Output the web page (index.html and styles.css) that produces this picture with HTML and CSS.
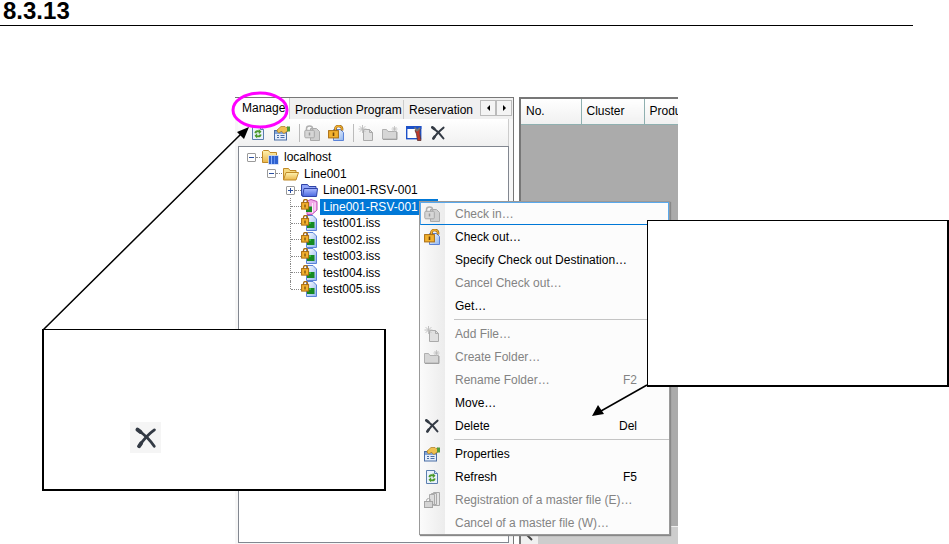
FILE: index.html
```html
<!DOCTYPE html>
<html lang="en">
<head>
<meta charset="utf-8">
<title>8.3.13</title>
<link rel="stylesheet" href="styles.css">
</head>
<body>
<svg class="defs" width="0" height="0" aria-hidden="true">
    <defs>
        <linearGradient id="g-page" x1="0" y1="0" x2="1" y2="1"><stop offset="0" stop-color="#fff"/><stop offset="1" stop-color="#8fb4ee"/></linearGradient>
        <linearGradient id="g-gold" x1="0" y1="0" x2="0" y2="1"><stop offset="0" stop-color="#fff3b0"/><stop offset="1" stop-color="#e9b64c"/></linearGradient>
        <linearGradient id="g-blue" x1="0" y1="0" x2="0" y2="1"><stop offset="0" stop-color="#a9b9ff"/><stop offset="1" stop-color="#4a68e0"/></linearGradient>
    </defs>
    <symbol id="i-refresh" viewBox="0 0 16 16">
        <path d="M2.500 1.500h8l3 3v10h-11z" fill="#eaf2fd" stroke="#5b7fae"/>
        <path d="M10.500 1.500v3h3" fill="#cfdff5" stroke="#5b7fae"/>
        <path d="M4.500 8c0-2 2-3.500 4.300-2.500V4l2.700 2.700L8.800 9.200V7.500C7.500 7 6.500 7.500 6.300 8.500z" fill="#4c9a2a"/>
        <path d="M11.500 9.500c0 2.300-2 3.500-4.300 2.500v1.500l-2.700-2.700 2.700-2.500v1.900c1.300.5 2.300 0 2.500-1z" fill="#4c9a2a"/>
    </symbol>
    <symbol id="i-props" viewBox="0 0 16 16">
        <rect x=".5" y="5.500" width="12" height="9.500" fill="#e4eefc" stroke="#4a6ea5"/>
        <path d="M1 6h11v3H1z" fill="#7fa3d8"/>
        <path d="M3 10.500h2m1.500 0h4M3 12.500h2m1.500 0h4" stroke="#4a6ea5"/>
        <path d="M3 5l4-3.500h4l1 1 2-.5v4l-2 1-2 1.500-1.500-1L8 6.500 7 6.500 5 8 3.500 7z" fill="#efc050" stroke="#a87a20" stroke-width=".7"/>
        <path d="M13 1.500h3V6.500h-3z" fill="#4f9a3a"/>
    </symbol>
    <symbol id="i-checkin" viewBox="0 0 16 16">
        <path d="M6.500 3.500h6l3 3v9h-9z" fill="#cfcfcf" stroke="#aaa"/>
        <path d="M2.500 5.500V3.500a3 2.500 0 0 1 6 0v2" fill="none" stroke="#b0b0b0" stroke-width="1.500"/>
        <rect x=".8" y="5.300" width="9.500" height="7.500" rx="1" fill="#d6d6d6" stroke="#a8a8a8"/>
        <path d="M5.500 7.500v3" stroke="#999" stroke-width="1.500"/>
    </symbol>
    <symbol id="i-checkout" viewBox="0 0 16 16">
        <path d="M5.500 4.500h7l3 3v8h-10z" fill="url(#g-page)" stroke="#5a82d8"/>
        <path d="M7.500 6V3.500a3.200 2.400 0 0 1 6.500 0V5.500" fill="none" stroke="#8a5a10" stroke-width="2.600"/>
        <path d="M7.500 6V3.500a3.200 2.400 0 0 1 6.500 0V5" fill="none" stroke="#f0ad2e" stroke-width="1.400"/>
        <rect x=".6" y="5.600" width="9.800" height="7.300" fill="#f3b22f" stroke="#a86c10"/>
        <path d="M5.500 7.500v3.500" stroke="#70450a" stroke-width="1.600"/>
    </symbol>
    <symbol id="i-addfile" viewBox="0 0 16 16">
        <path d="M5.500 4.500h6l3 3v8h-9z" fill="#e0e0e0" stroke="#aaa"/>
        <path d="M11.500 4.500v3h3" fill="none" stroke="#aaa"/>
        <path d="M4.500 0v8M.5 4h8M1.700 1.200l5.600 5.600M7.300 1.200L1.700 6.800" stroke="#bbb" stroke-width=".9"/>
    </symbol>
    <symbol id="i-newfolder" viewBox="0 0 16 16">
        <path d="M.5 14v-9.500h4l1.500 2h8.500V14z" fill="#d6d6d6" stroke="#b0b0b0"/>
        <path d="M1 14.500h14V7" fill="none" stroke="#a0a0a0"/>
        <path d="M12.500 1v6M9.500 4h6M10.500 2l4 4M14.500 2l-4 4" stroke="#bbb" stroke-width=".8"/>
    </symbol>
    <symbol id="i-master" viewBox="0 0 16 16">
        <rect x=".7" y="1.700" width="14" height="12" fill="#fff" stroke="#1c50c8" stroke-width="1.400"/>
        <path d="M0 1h15.400v3H0z" fill="#1c50c8"/>
        <path d="M9 5.500l5-1.500-.5 4 1.500 7.500h-3.500L10.500 9z" fill="#c0392b" stroke="#5c3030" stroke-width=".8"/>
        <path d="M8.500 2.500l2.500 3 3-2.500" fill="none" stroke="#777" stroke-width="1.700"/>
    </symbol>
    <symbol id="i-delete" viewBox="0 0 16 16">
        <path d="M2.300 2.400C6 5 10.500 9 13.500 13.500" fill="none" stroke="#333a44" stroke-width="1.900" stroke-linecap="round"/>
        <path d="M13.600 2.600C9.500 5.500 6 9.500 3.300 13.600" fill="none" stroke="#333a44" stroke-width="1.900" stroke-linecap="round"/>
        <path d="M2.300 2.400l2 1.500M3.400 13.500l1.300-1.900" stroke="#333a44" stroke-width="2.600" stroke-linecap="round"/>
    </symbol>
    <symbol id="i-register" viewBox="0 0 16 16">
        <path d="M9.500.5h6v13h-6z" fill="#e4e4e4" stroke="#aaa"/>
        <path d="M7.500 1.500h5v11h-5z" fill="#e4e4e4" stroke="#aaa"/>
        <path d="M5.500 2.500h5v10h-5z" fill="#dcdcdc" stroke="#aaa"/>
        <path d="M2.500 10V8.500a2 2 0 0 1 4 0V10" fill="none" stroke="#aaa"/>
        <rect x=".5" y="9.500" width="8" height="6" fill="#d4d4d4" stroke="#a4a4a4"/>
    </symbol>
    <symbol id="i-host" viewBox="0 0 17 16">
        <path d="M.5 13.500v-11l1-1h5l1.500 2h6.500v10z" fill="url(#g-gold)" stroke="#c08a28"/>
        <path d="M6.500 6.500h10v9h-10z" fill="#2f62cf" stroke="#fff" stroke-width=".6"/>
        <path d="M9.500 7v8" stroke="#8db4ff"/>
        <path d="M12.500 7v8" stroke="#5d8cf0"/>
    </symbol>
    <symbol id="i-folder" viewBox="0 0 17 16">
        <path d="M1.500 13.500v-11h5l1.500 2h6v3" fill="#f6da80" stroke="#c08a28"/>
        <path d="M1.500 14L4 6.500h12.500L14 14z" fill="url(#g-gold)" stroke="#c08a28"/>
    </symbol>
    <symbol id="i-folder-blue" viewBox="0 0 17 16">
        <path d="M.5 13.500v-11h6l1.500 2h7v9z" fill="#91a5f8" stroke="#3044a8"/>
        <path d="M1.500 14.500L3 6.500h13.500l-1 8z" fill="url(#g-blue)" stroke="#3044a8"/>
    </symbol>
    <symbol id="i-file" viewBox="0 0 17 16">
        <path d="M5.500.5h6.500l3.500 3.500v11.500h-10z" fill="url(#g-page)" stroke="#5a82d8"/>
        <path d="M6 7h7.500v6H6z" fill="#178a22"/>
        <path d="M7 7h3v2H7z" fill="#2dbf3b"/>
        <path d="M2.500 4V2.500a2 2 0 0 1 4 0V4" fill="none" stroke="#a86c10" stroke-width="1.300"/>
        <rect x=".6" y="3.600" width="7" height="6.500" fill="#f3b22f" stroke="#a86c10"/>
        <path d="M4 5.500v3" stroke="#70450a" stroke-width="1.200"/>
    </symbol>
    <symbol id="i-file-pink" viewBox="0 0 17 16">
        <path d="M6 2l4-1.500 6 2V11l-5 4.500H6z" fill="#f0a6e6" stroke="#c050b8"/>
        <path d="M11.500 4v10M14 3.500v8.500" stroke="#fff" stroke-width=".8"/>
        <path d="M5 7.500h6V13H5z" fill="#178a22"/>
        <path d="M2.500 4V2.500a2 2 0 0 1 4 0V4" fill="none" stroke="#a86c10" stroke-width="1.300"/>
        <rect x=".6" y="3.600" width="7" height="6.500" fill="#f3b22f" stroke="#a86c10"/>
        <path d="M4 5.500v3" stroke="#70450a" stroke-width="1.200"/>
    </symbol>
</svg>

<h1>8.3.13</h1>

<div class="figure">
    <div class="panel">
        <div class="tabs">
            <button class="tab on">Manage</button>
            <button class="tab program">Production Program</button>
            <button class="tab">Reservation</button>
            <div class="spin">
                <button aria-label="Scroll left"><svg width="5" height="6"><path d="M4 0v6L1 3z"/></svg></button>
                <button aria-label="Scroll right"><svg width="5" height="6"><path d="M1 0v6l3-3z"/></svg></button>
            </div>
        </div>
        <div class="toolbar">
            <button aria-label="Refresh"><svg class="icon"><use href="#i-refresh"/></svg></button>
            <button aria-label="Properties"><svg class="icon"><use href="#i-props"/></svg></button>
            <span class="sep"></span>
            <button aria-label="Check in" disabled><svg class="icon"><use href="#i-checkin"/></svg></button>
            <button aria-label="Check out"><svg class="icon"><use href="#i-checkout"/></svg></button>
            <span class="sep"></span>
            <button aria-label="Add File" disabled><svg class="icon"><use href="#i-addfile"/></svg></button>
            <button aria-label="Create Folder" disabled><svg class="icon"><use href="#i-newfolder"/></svg></button>
            <button aria-label="Master file"><svg class="icon"><use href="#i-master"/></svg></button>
            <button aria-label="Delete"><svg class="icon"><use href="#i-delete"/></svg></button>
        </div>
        <ul class="tree">
            <li class="l1"><span class="box"></span><svg class="node"><use href="#i-host"/></svg><span class="name">localhost</span></li>
            <li class="l2"><span class="box"></span><svg class="node"><use href="#i-folder"/></svg><span class="name">Line001</span></li>
            <li class="l3"><span class="box plus"></span><svg class="node"><use href="#i-folder-blue"/></svg><span class="name">Line001-RSV-001</span></li>
            <li class="l3 sel"><span class="branch"></span><svg class="node"><use href="#i-file-pink"/></svg><span class="name">Line001-RSV-001</span></li>
            <li class="l3"><span class="branch"></span><svg class="node"><use href="#i-file"/></svg><span class="name">test001.iss</span></li>
            <li class="l3"><span class="branch"></span><svg class="node"><use href="#i-file"/></svg><span class="name">test002.iss</span></li>
            <li class="l3"><span class="branch"></span><svg class="node"><use href="#i-file"/></svg><span class="name">test003.iss</span></li>
            <li class="l3"><span class="branch"></span><svg class="node"><use href="#i-file"/></svg><span class="name">test004.iss</span></li>
            <li class="l3"><span class="branch last"></span><svg class="node"><use href="#i-file"/></svg><span class="name">test005.iss</span></li>
        </ul>
    </div>

    <div class="list">
        <table>
            <thead><tr><th class="no">No.</th><th class="cluster">Cluster</th><th>Produ</th></tr></thead>
        </table>
        <div class="scroll">
            <button aria-label="Scroll left"><svg width="7" height="10"><path d="M6 1L2 5l4 4" fill="none" stroke="#444" stroke-width="2"/></svg></button>
        </div>
    </div>

    <div class="menu" role="menu">
        <button class="item hot" disabled><svg class="icon"><use href="#i-checkin"/></svg><span>Check in…</span></button>
        <button class="item"><svg class="icon"><use href="#i-checkout"/></svg><span>Check out…</span></button>
        <button class="item"><svg class="icon"></svg><span>Specify Check out Destination…</span></button>
        <button class="item" disabled><svg class="icon"></svg><span>Cancel Check out…</span></button>
        <button class="item"><svg class="icon"></svg><span>Get…</span></button>
        <hr>
        <button class="item" disabled><svg class="icon"><use href="#i-addfile"/></svg><span>Add File…</span></button>
        <button class="item" disabled><svg class="icon"><use href="#i-newfolder"/></svg><span>Create Folder…</span></button>
        <button class="item" disabled><svg class="icon"></svg><span>Rename Folder…</span><kbd>F2</kbd></button>
        <button class="item"><svg class="icon"></svg><span>Move…</span></button>
        <button class="item"><svg class="icon"><use href="#i-delete"/></svg><span>Delete</span><kbd>Del</kbd></button>
        <hr>
        <button class="item"><svg class="icon"><use href="#i-props"/></svg><span>Properties</span></button>
        <button class="item"><svg class="icon"><use href="#i-refresh"/></svg><span>Refresh</span><kbd>F5</kbd></button>
        <button class="item" disabled><svg class="icon"><use href="#i-register"/></svg><span>Registration of a master file (E)…</span></button>
        <button class="item" disabled><svg class="icon"></svg><span>Cancel of a master file (W)…</span></button>
    </div>

    <div class="note note-left"><span class="chip"><svg width="24" height="24"><use href="#i-delete"/></svg></span></div>
    <div class="note note-right"></div>

    <!-- ring and arrows, in the figure's own coordinates -->
    <svg class="marks" width="443" height="447" aria-hidden="true">
        <ellipse cx="25" cy="13" rx="27" ry="17" fill="none" stroke="#f0f" stroke-width="3"/>
        <path d="M-192 233L6 37M412 288l-46 26" stroke="#000" stroke-width="1.500"/>
        <path d="M14 30L9 42 2 35zM357 319l6-11 6 9z"/>
    </svg>
</div>
</body>
</html>
```
FILE: styles.css
```css
body { margin:0; background:#fff; color:#000; font:12px/16px "Liberation Sans",Arial,sans-serif; overflow:hidden; }
button { margin:0; padding:0; border:0; background:none; font:inherit; color:inherit; }
ul { list-style:none; margin:0; padding:0; }
svg { display:block; }
.defs { position:absolute; }
.icon { width:16px; height:16px; flex:none; }

h1 { margin:0 36px 71px 0; padding:0 0 3px 3px; border-bottom:1px solid #000; font-size:24px; line-height:22px; }

.figure { position:relative; display:flex; height:calc(100vh - 97px); min-height:447px; margin:0 271px 0 235px; }

/* left panel */
.panel { display:flex; flex-direction:column; width:279px; flex:none; box-sizing:border-box; padding:0 4px 1px 3px; background:#f7f7f7; border-top:1px solid #777; border-right:1px solid #777; }
.tabs { display:flex; align-items:flex-end; height:21px; margin:0 -4px 0 -3px; background:#f0f0f0; }
.tab { height:19px; padding:0 0 0 5px; text-align:left; white-space:nowrap; border-right:1px solid #ccc; }
.tab.on { height:21px; width:55px; padding:0 0 2px 7px; background:#fff; }
.tab.program { width:114px; }
.tab:nth-child(3) { flex:1; border:0; }
.spin { display:flex; align-self:flex-start; margin:2px 1px 0 0; }
.spin button { display:flex; align-items:center; justify-content:center; width:16px; height:16px; box-sizing:border-box; border:1px solid #bbb; background:#f4f4f4; }
.toolbar { display:flex; align-items:center; height:27px; padding-left:12px; background:linear-gradient(#fff,#f0f0f0); border-right:1px solid #ccc; }
.toolbar button { margin-right:8px; }
.sep { width:1px; height:18px; margin:0 4px 0 1px; background:#bbb; }

.tree { flex:1; padding-top:2px; background:#fff; border:1px solid #828790; }
.tree li { display:flex; align-items:center; height:16px; }
.tree li:nth-child(even) { height:17px; }
.l1 { padding-left:8px; }
.l2 { padding-left:28px; }
.l3 { padding-left:47px; }
.node { width:17px; height:16px; flex:none; }
.name { padding:0 3px; margin-left:2px; white-space:nowrap; }
.sel .name { width:112px; background:#0078d7; color:#fff; }
.box { position:relative; width:7px; height:7px; flex:none; margin-right:6px; border:1px solid #9a9a9a; border-radius:1px; background:linear-gradient(90deg,#2b4fa0,#2b4fa0) center/5px 1px no-repeat #fff; }
.box::after { content:""; position:absolute; left:8px; top:3px; width:6px; border-top:1px dotted #888; }
.plus { background:linear-gradient(#2b4fa0,#2b4fa0) center/5px 1px no-repeat,linear-gradient(#2b4fa0,#2b4fa0) center/1px 5px no-repeat,#fff; }
.branch { position:relative; width:10px; flex:none; align-self:stretch; margin-left:4px; border-left:1px dotted #888; }
.branch::after { content:""; position:absolute; left:0; top:8px; width:10px; border-top:1px dotted #888; }
.branch.last { align-self:flex-start; height:8px; }

/* list on the right */
.list { display:flex; flex-direction:column; flex:1; min-width:0; overflow:hidden; margin-left:5px; border-top:2px solid #777; border-left:2px solid #777; background:#ababab; }
table { width:100%; table-layout:fixed; border-collapse:collapse; }
th { height:25px; box-sizing:border-box; padding:0 0 0 5px; text-align:left; font-weight:normal; background:linear-gradient(#fff,#f0f0f0); border-right:1px solid #8fb0b0; border-bottom:1px solid #8fb0b0; }
th:last-child { border-right:0; }
.no { width:60px; }
.cluster { width:63px; }
.scroll { height:17px; margin-top:auto; background:#cdcdcd; border-top:1px solid #eee; }
.scroll button { display:flex; align-items:center; justify-content:center; width:17px; height:17px; background:#f0f0f0; }

/* context menu */
.menu { position:absolute; left:184px; top:104px; width:249px; border:1px solid #999; background:linear-gradient(90deg,#fbfbfb,#ececec) left/25px 100% no-repeat #fcfcfc; box-shadow:1px 1px 1px #888; }
.item { display:flex; align-items:center; width:100%; height:23px; padding:0 32px 0 4px; text-align:left; white-space:nowrap; }
.item span { flex:1; margin-left:15px; }
.item kbd { font:inherit; }
.item:disabled { color:#838383; }
.item.hot { padding-left:3px; border:1px solid #5aa9ec; border-bottom-color:#0078d7; background:linear-gradient(90deg,#f7f7f7,#ececec) left/24px 100% no-repeat #fcfcfc; }
.menu hr { height:1px; margin:2px 0 2px 34px; border:0; background:#c4c4c4; }

/* callouts */
.note { position:absolute; box-sizing:border-box; background:#fff; border:2px solid #000; border-top-width:1px; }
.note-left { left:-193px; top:232px; width:344px; height:162px; padding:92px 0 0 86px; }
.note-right { left:412px; top:123px; width:302px; height:167px; border-left-width:1px; }
.chip { display:flex; align-items:center; justify-content:center; width:31px; height:31px; background:#f5f5f5; }
.marks { position:absolute; left:0; top:0; overflow:visible; pointer-events:none; }
```
